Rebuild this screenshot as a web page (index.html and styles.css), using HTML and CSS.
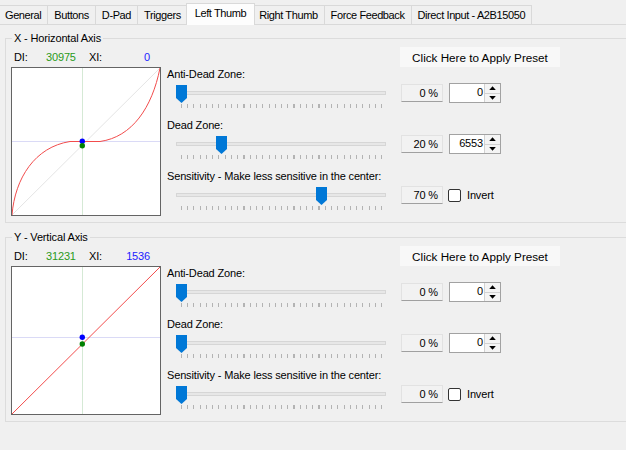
FILE: index.html
```html
<!DOCTYPE html>
<html>
<head>
<meta charset="utf-8">
<title>Left Thumb</title>
<link rel="stylesheet" href="styles.css">
</head>
<body>
<div class="tabstrip">
  <div class="tab first">General</div>
  <div class="tab">Buttons</div>
  <div class="tab">D-Pad</div>
  <div class="tab">Triggers</div>
  <div class="tab active">Left Thumb</div>
  <div class="tab">Right Thumb</div>
  <div class="tab">Force Feedback</div>
  <div class="tab">Direct Input - A2B15050</div>
</div>
<div class="page">
  <fieldset class="group">
    <legend>X - Horizontal Axis</legend>
    <div class="group-body">
      <div class="axis">
        <div class="readout"><span class="ro-label">DI:</span><span class="ro-di">30975</span><span class="ro-label ro-xl">XI:</span><span class="ro-xi">0</span></div>
        <svg class="chart" width="148" height="147" viewBox="0 0 148 147">
          <line x1="0" y1="147" x2="148" y2="0" stroke="#e4e4e4" stroke-width="1"/>
          <line x1="70.5" y1="0" x2="70.5" y2="147" stroke="#d5e9d5" stroke-width="1"/>
          <line x1="0" y1="73.5" x2="148" y2="73.5" stroke="#dadaf6" stroke-width="1"/>
          <path d="M0,147 C3,110 23,79 58,73.5 L88,73.5 C120,69 140,40 148,0" fill="none" stroke="#f24c4c" stroke-width="1"/>
          <circle cx="70.3" cy="73.3" r="2.7" fill="#0000ff"/>
          <circle cx="70.3" cy="77.8" r="2.7" fill="#008000"/>
        </svg>
      </div>
      <div class="controls">
        <button class="preset">Click Here to Apply Preset</button>

        <div class="slider-block">
          <div class="label">Anti-Dead Zone:</div>
          <div class="slider"><div class="track"></div><svg class="thumb" style="left:0px" width="11" height="18" viewBox="0 0 11 18"><path d="M0,0H11V13L5.5,18L0,13Z" fill="#0078d7"/></svg><div class="ticks"></div></div>
        </div>
        <div class="value-block">
          <div class="pct">0 %</div>
          <div class="spinbox"><span class="spin-value">0</span><span class="spin"><span class="spin-btn"><i class="arrow up"></i></span><span class="spin-btn"><i class="arrow down"></i></span></span></div>
        </div>

        <div class="slider-block">
          <div class="label">Dead Zone:</div>
          <div class="slider"><div class="track"></div><svg class="thumb" style="left:39.5px" width="11" height="18" viewBox="0 0 11 18"><path d="M0,0H11V13L5.5,18L0,13Z" fill="#0078d7"/></svg><div class="ticks"></div></div>
        </div>
        <div class="value-block">
          <div class="pct">20 %</div>
          <div class="spinbox"><span class="spin-value">6553</span><span class="spin"><span class="spin-btn"><i class="arrow up"></i></span><span class="spin-btn"><i class="arrow down"></i></span></span></div>
        </div>

        <div class="slider-block">
          <div class="label">Sensitivity - Make less sensitive in the center:</div>
          <div class="slider"><div class="track"></div><svg class="thumb" style="left:139.5px" width="11" height="18" viewBox="0 0 11 18"><path d="M0,0H11V13L5.5,18L0,13Z" fill="#0078d7"/></svg><div class="ticks"></div></div>
        </div>
        <div class="value-block">
          <div class="pct">70 %</div>
          <label class="check"><span class="box"></span><span>Invert</span></label>
        </div>
      </div>
    </div>
  </fieldset>

  <fieldset class="group">
    <legend>Y - Vertical Axis</legend>
    <div class="group-body">
      <div class="axis">
        <div class="readout"><span class="ro-label">DI:</span><span class="ro-di">31231</span><span class="ro-label ro-xl">XI:</span><span class="ro-xi">1536</span></div>
        <svg class="chart" width="148" height="147" viewBox="0 0 148 147">
          <line x1="70.5" y1="0" x2="70.5" y2="147" stroke="#d5e9d5" stroke-width="1"/>
          <line x1="0" y1="70.5" x2="148" y2="70.5" stroke="#dadaf6" stroke-width="1"/>
          <line x1="0" y1="147" x2="148" y2="0" stroke="#f24c4c" stroke-width="1"/>
          <circle cx="70.3" cy="70.3" r="2.7" fill="#0000ff"/>
          <circle cx="70.3" cy="77" r="2.7" fill="#008000"/>
        </svg>
      </div>
      <div class="controls">
        <button class="preset">Click Here to Apply Preset</button>

        <div class="slider-block">
          <div class="label">Anti-Dead Zone:</div>
          <div class="slider"><div class="track"></div><svg class="thumb" style="left:0px" width="11" height="18" viewBox="0 0 11 18"><path d="M0,0H11V13L5.5,18L0,13Z" fill="#0078d7"/></svg><div class="ticks"></div></div>
        </div>
        <div class="value-block">
          <div class="pct">0 %</div>
          <div class="spinbox"><span class="spin-value">0</span><span class="spin"><span class="spin-btn"><i class="arrow up"></i></span><span class="spin-btn"><i class="arrow down"></i></span></span></div>
        </div>

        <div class="slider-block">
          <div class="label">Dead Zone:</div>
          <div class="slider"><div class="track"></div><svg class="thumb" style="left:0px" width="11" height="18" viewBox="0 0 11 18"><path d="M0,0H11V13L5.5,18L0,13Z" fill="#0078d7"/></svg><div class="ticks"></div></div>
        </div>
        <div class="value-block">
          <div class="pct">0 %</div>
          <div class="spinbox"><span class="spin-value">0</span><span class="spin"><span class="spin-btn"><i class="arrow up"></i></span><span class="spin-btn"><i class="arrow down"></i></span></span></div>
        </div>

        <div class="slider-block">
          <div class="label">Sensitivity - Make less sensitive in the center:</div>
          <div class="slider"><div class="track"></div><svg class="thumb" style="left:0px" width="11" height="18" viewBox="0 0 11 18"><path d="M0,0H11V13L5.5,18L0,13Z" fill="#0078d7"/></svg><div class="ticks"></div></div>
        </div>
        <div class="value-block">
          <div class="pct">0 %</div>
          <label class="check"><span class="box"></span><span>Invert</span></label>
        </div>
      </div>
    </div>
  </fieldset>
</div>
</body>
</html>
```

FILE: styles.css
```css
* { box-sizing: border-box; }

html, body { margin: 0; padding: 0; }

body {
  width: 626px;
  height: 450px;
  overflow: hidden;
  background: #f0f0f0;
  color: #000;
  font-family: "Liberation Sans", Arial, sans-serif;
  font-size: 11px;
  letter-spacing: -0.15px;
}

/* ---------- tab strip ---------- */
.tabstrip {
  display: flex;
  align-items: flex-end;
  height: 24px;
}

.tab {
  height: 19px;
  line-height: 18px;
  padding: 0 6px;
  margin-left: -1px;
  border: 1px solid #d9d9d9;
  border-bottom: 0;
  background: #f0f0f0;
  white-space: nowrap;
  letter-spacing: -0.4px;
}

.tab.first { margin-left: -2px; }

.tab.active {
  position: relative;
  z-index: 1;
  height: 22px;
  margin: 0 -2px -1px -2px;
  padding: 0 8px;
  background: #fdfdfd;
}

.page {
  border-top: 1px solid #d9d9d9;
  height: 426px;
}

/* ---------- group boxes ---------- */
.group {
  width: 640px;
  min-width: 0;
  margin: 7px 0 0 5px;
  padding: 0;
  border: 1px solid #dcdcdc;
}

.group + .group { margin-top: 8px; }

.group legend {
  margin-left: 6px;
  padding: 0 2px;
  line-height: 13px;
  font-size: 11px;
}

.group-body {
  display: flex;
  align-items: flex-start;
}

/* ---------- left: readout + chart ---------- */
.axis {
  width: 150px;
  margin-left: 5px;
  padding: 6px 0 6px 0;
}

.readout {
  display: flex;
  height: 13px;
  line-height: 13px;
  padding: 0 11px 0 3px;
  margin-bottom: 3px;
}

.ro-label { width: 32px; }
.ro-di { width: 43px; color: #2a9a20; }
.ro-xl { flex: 1; }
.ro-xi { color: #1c1cff; text-align: right; }

.chart {
  display: block;
  border: 1px solid #646464;
  background: #fff;
  box-sizing: content-box;
}

/* ---------- right: controls ---------- */
.controls {
  margin-left: 6px;
  padding-top: 2px;
  display: grid;
  grid-template-columns: 219px 1fr;
  grid-template-rows: 21px repeat(3, 51px);
  column-gap: 14px;
}

.preset {
  grid-column: 2;
  align-self: start;
  width: 160px;
  height: 20px;
  padding: 0;
  border: 0;
  background: #f8f8f8;
  font-family: "Liberation Sans", Arial, sans-serif;
  font-size: 11.7px;
  letter-spacing: 0;
  color: #000;
}

.slider-block { grid-column: 1; }

.label {
  height: 13px;
  line-height: 13px;
  white-space: nowrap;
}

.slider {
  position: relative;
  width: 210px;
  height: 27px;
  margin-left: 9px;
  padding-top: 10px;
}

.track {
  height: 4px;
  border: 1px solid #d6d6d6;
  background: #e7e7e7;
}

.thumb {
  position: absolute;
  top: 4px;
  display: block;
}

.ticks {
  width: 201px;
  height: 4px;
  margin: 9px 0 0 5px;
  background: repeating-linear-gradient(to right, #b3b3b3 0 1px, transparent 1px 6.25px);
}

.value-block {
  grid-column: 2;
  display: flex;
  align-items: flex-start;
  padding-top: 16px;
}

.pct {
  width: 42px;
  height: 18px;
  margin-left: 1px;
  padding-right: 4px;
  line-height: 16px;
  text-align: right;
  border: 1px solid #e2e2e2;
  border-bottom-color: #a0a0a0;
  background: #f2f2f2;
}

.spinbox {
  display: flex;
  width: 52px;
  height: 20px;
  margin: -1px 0 0 6px;
  border: 1px solid #a2a2a2;
  background: #fff;
}

.spin-value {
  flex: 1;
  line-height: 17px;
  text-align: right;
  padding-right: 1px;
}

.spin {
  display: flex;
  flex-direction: column;
  width: 16px;
  border-left: 1px solid #d2d2d2;
}

.spin-btn {
  flex: 1;
  display: flex;
  align-items: center;
  justify-content: center;
  background: #f4f4f4;
}

.spin-btn + .spin-btn { border-top: 1px solid #d2d2d2; }

.arrow {
  display: block;
  width: 7px;
  height: 4px;
  background: #000;
}

.arrow.up { clip-path: polygon(50% 0, 100% 100%, 0 100%); }
.arrow.down { clip-path: polygon(0 0, 100% 0, 50% 100%); }

.check {
  display: flex;
  align-items: center;
  margin: 3px 0 0 5px;
  line-height: 13px;
}

.check .box {
  width: 13px;
  height: 13px;
  margin-right: 6px;
  border: 1px solid #333;
  border-radius: 2px;
  background: #fff;
}
```
